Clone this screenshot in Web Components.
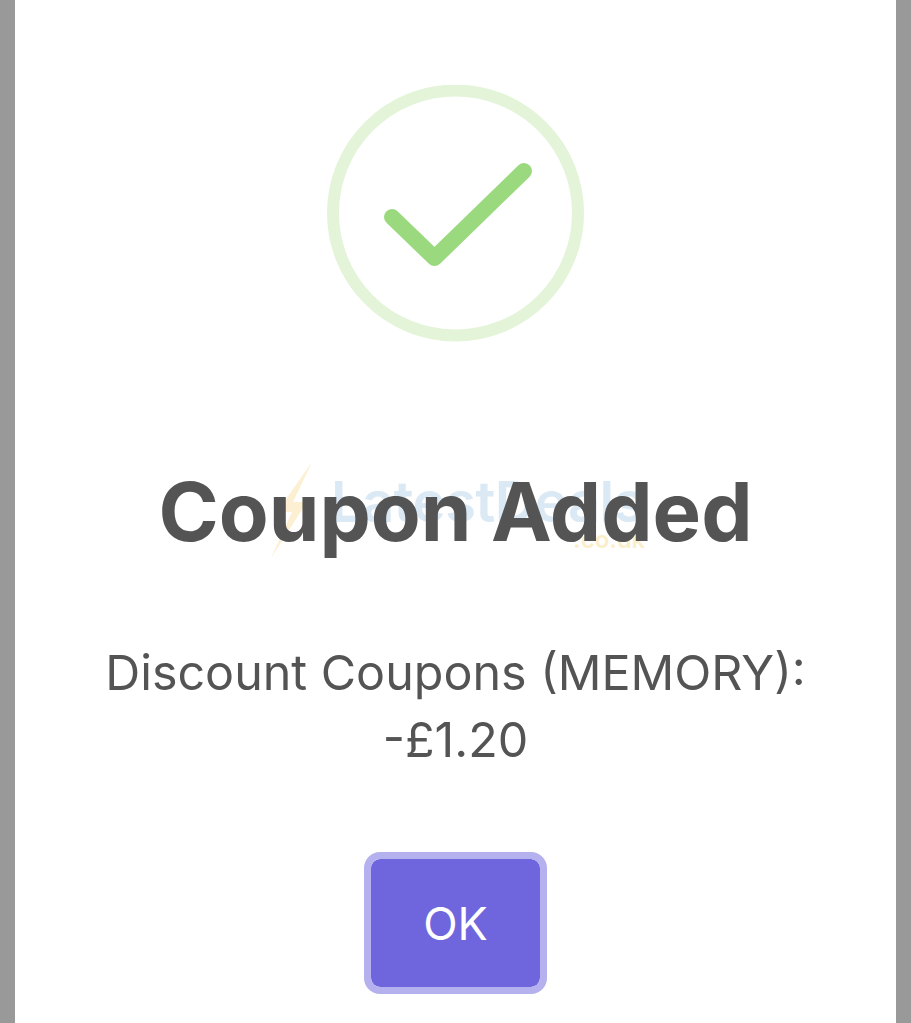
<!DOCTYPE html>
<html>
<head>
<meta charset="utf-8">
<style>
  html, body { margin: 0; height: 100%; background: #999; }
</style>
</head>
<body>
<coupon-backdrop>
  <coupon-dialog title-text="Coupon Added" ok-text="OK">
    Discount Coupons (MEMORY):<br>-£1.20
  </coupon-dialog>
</coupon-backdrop>

<script>
class CouponBackdrop extends HTMLElement {
  constructor() {
    super();
    const shadowRoot = this.attachShadow({mode: 'open'});
    shadowRoot.innerHTML = `
      <style>
        :host {
          display: block;
          box-sizing: border-box;
          height: 1023px;
          padding: 0 15px;
          background: #999;
          overflow: hidden;
        }
      </style>
      <slot></slot>
    `;
  }
}

class SuccessIcon extends HTMLElement {
  constructor() {
    super();
    const shadowRoot = this.attachShadow({mode: 'open'});
    shadowRoot.innerHTML = `
      <style>
        :host { display: block; width: 257px; height: 257px; }
        svg { display: block; }
      </style>
      <svg width="257" height="257" viewBox="0 0 257 257" fill="none">
        <circle cx="128.5" cy="128" r="122.5" stroke="#e3f4d9" stroke-width="12"/>
        <path d="M65 132L107.5 173L197 86" stroke="#9bd97f" stroke-width="16" stroke-linecap="round" stroke-linejoin="round"/>
      </svg>
    `;
  }
}

class DealsWatermark extends HTMLElement {
  constructor() {
    super();
    const shadowRoot = this.attachShadow({mode: 'open'});
    shadowRoot.innerHTML = `
      <style>
        :host {
          position: absolute;
          left: 255px;
          top: 460px;
          width: 400px;
          height: 100px;
          font-family: "Inter", "Liberation Sans", sans-serif;
          pointer-events: none;
        }
        svg { position: absolute; left: 0; top: 0; }
        .name {
          position: absolute;
          left: 76px;
          top: 10px;
          font-size: 56px;
          font-weight: 600;
          line-height: 64px;
          letter-spacing: -0.5px;
          color: #dbe9f4;
          white-space: nowrap;
        }
        .tld {
          position: absolute;
          left: 318px;
          top: 69px;
          font-size: 24px;
          font-weight: 600;
          line-height: 22px;
          color: #fbeecb;
          white-space: nowrap;
        }
      </style>
      <svg width="70" height="100" viewBox="0 0 70 100">
        <path d="M57 2L22 52L37 52L16 98L52 42L38 42Z" fill="#fcefd2"/>
      </svg>
      <span class="name">LatestDeals</span>
      <span class="tld">.co.uk</span>
    `;
  }
}

class OkButton extends HTMLElement {
  constructor() {
    super();
    const shadowRoot = this.attachShadow({mode: 'open'});
    shadowRoot.innerHTML = `
      <style>
        :host {
          display: flex;
          align-items: center;
          justify-content: center;
          box-sizing: border-box;
          width: 183px;
          height: 142px;
          border: 7px solid #b5b1ef;
          border-radius: 16px;
          background: #6f66de;
          background-clip: padding-box;
          color: #fff;
          font-size: 45px;
          font-weight: 400;
        }
      </style>
      <slot></slot>
    `;
  }
}

class CouponDialog extends HTMLElement {
  constructor() {
    super();
    const shadowRoot = this.attachShadow({mode: 'open'});
    shadowRoot.innerHTML = `
      <style>
        :host {
          display: flex;
          flex-direction: column;
          align-items: center;
          box-sizing: border-box;
          height: 1023px;
          padding-top: 85px;
          background: #fff;
          color: #545454;
          font-family: "Inter", "Liberation Sans", sans-serif;
        }
        h2 {
          position: relative;
          margin: 122px 0 0;
          font-size: 81.5px;
          font-weight: 650;
          line-height: 96px;
          white-space: nowrap;
        }
        .body {
          position: relative;
          margin-top: 79px;
          font-size: 48.4px;
          line-height: 67px;
          text-align: center;
          white-space: nowrap;
        }
        ok-button { margin-top: 79px; }
      </style>
      <deals-watermark></deals-watermark>
      <success-icon></success-icon>
      <h2 id="title"></h2>
      <div class="body"><slot></slot></div>
      <ok-button id="ok"></ok-button>
    `;
    this.titleEl = shadowRoot.querySelector('#title');
    this.okEl = shadowRoot.querySelector('#ok');
  }

  connectedCallback() {
    this.titleEl.textContent = this.getAttribute('title-text');
    this.okEl.textContent = this.getAttribute('ok-text');
  }
}

customElements.define('coupon-backdrop', CouponBackdrop);
customElements.define('success-icon', SuccessIcon);
customElements.define('deals-watermark', DealsWatermark);
customElements.define('ok-button', OkButton);
customElements.define('coupon-dialog', CouponDialog);
</script>
</body>
</html>
